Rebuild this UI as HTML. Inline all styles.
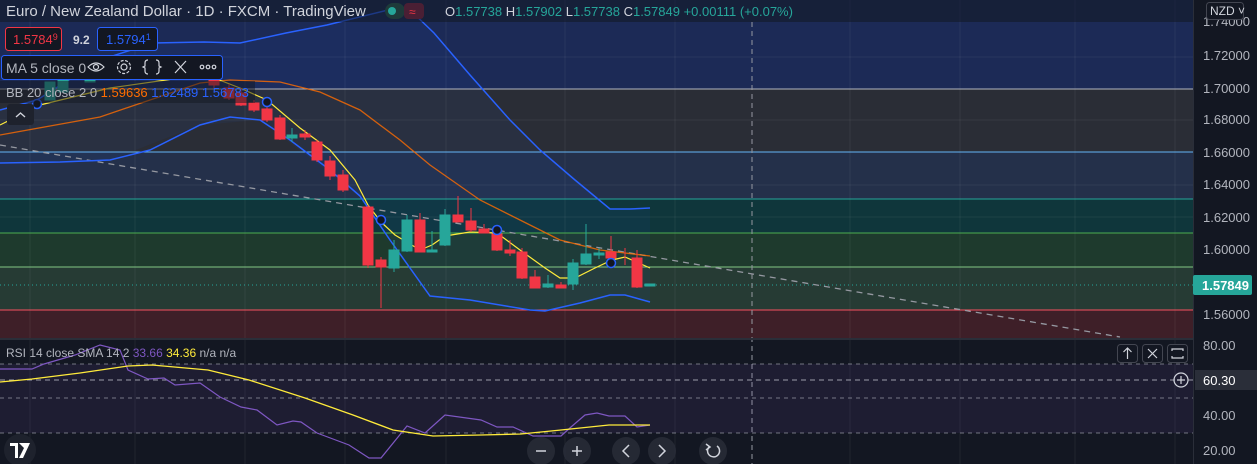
<!DOCTYPE html>
<html><head><meta charset="utf-8"><style>
html,body{margin:0;padding:0;background:#131722;width:1257px;height:464px;overflow:hidden;font-family:"Liberation Sans",sans-serif}
svg{display:block}
</style></head><body>
<svg width="1257" height="464" xmlns="http://www.w3.org/2000/svg" font-family="Liberation Sans, sans-serif">
<rect width="1257" height="464" fill="#131722"/>
<rect x="0" y="0" width="1193" height="89" fill="#1c2a56"/>
<rect x="0" y="89" width="1193" height="63" fill="#2a2d36"/>
<rect x="0" y="152" width="1193" height="47" fill="#24304a"/>
<rect x="0" y="199" width="1193" height="34" fill="#0f363b"/>
<rect x="0" y="233" width="1193" height="34" fill="#1e3a2d"/>
<rect x="0" y="267" width="1193" height="43" fill="#263b34"/>
<rect x="0" y="310" width="1193" height="28" fill="#3e1f28"/>
<path d="M0,110 L37,100 L100,60 L153,43 L204,42 L240,43 L286,33 L327,25 L388,10 L408,8 L434,33 L510,120 L540,150 L575,180 L610,209 L650,208 L650,302 L625,295 L545,311 L430,296 L360,196 L260,120 L200,125 L110,160 L0,163Z" fill="#2962ff" fill-opacity="0.06"/>
<g stroke="#ffffff" stroke-opacity="0.06">
<line x1="30" y1="0" x2="30" y2="464"/><line x1="135" y1="0" x2="135" y2="464"/><line x1="245" y1="0" x2="245" y2="464"/><line x1="345" y1="0" x2="345" y2="464"/><line x1="446" y1="0" x2="446" y2="464"/><line x1="565" y1="0" x2="565" y2="464"/><line x1="675" y1="0" x2="675" y2="464"/><line x1="850" y1="0" x2="850" y2="464"/><line x1="960" y1="0" x2="960" y2="464"/><line x1="1075" y1="0" x2="1075" y2="464"/><line x1="1175" y1="0" x2="1175" y2="464"/>
<line x1="0" y1="57" x2="1193" y2="57"/><line x1="0" y1="120" x2="1193" y2="120"/><line x1="0" y1="185" x2="1193" y2="185"/><line x1="0" y1="217" x2="1193" y2="217"/>
</g>
<line x1="0" y1="89" x2="1193" y2="89" stroke="#b2b5be"/>
<line x1="0" y1="152" x2="1193" y2="152" stroke="#64b5f6"/>
<line x1="0" y1="199" x2="1193" y2="199" stroke="#26a69a"/>
<line x1="0" y1="233" x2="1193" y2="233" stroke="#4caf50"/>
<line x1="0" y1="267" x2="1193" y2="267" stroke="#81c784"/>
<line x1="0" y1="310" x2="1193" y2="310" stroke="#f7525f"/>
<line x1="0" y1="285" x2="1193" y2="285" stroke="#26a69a" stroke-dasharray="1 3"/>
<line x1="0" y1="145" x2="1120" y2="337" stroke="#9598a1" stroke-width="1.3" stroke-dasharray="6 5"/>
<polyline fill="none" stroke="#2962ff" stroke-width="1.5" points="0,110 37,100 100,60 153,43 204,42 240,43 286,33 327,25 388,10 408,8 434,33 470,75 510,120 540,150 575,180 610,209 630,209 650,208"/>
<polyline fill="none" stroke="#2962ff" stroke-width="1.5" points="0,163 60,162 110,160 150,150 200,125 230,117 260,120 290,140 330,170 360,196 390,240 430,296 470,300 530,310 545,311 580,303 610,295 625,295 650,302"/>
<polyline fill="none" stroke="#ff6d00" stroke-opacity="0.8" stroke-width="1.3" points="0,135 50,126 100,117 150,100 200,83 230,80 280,82 320,92 360,110 400,140 430,165 480,200 530,225 560,240 600,250 650,256"/>
<polyline fill="none" stroke="#ffeb3b" stroke-width="1.2" points="0,125 40,105 110,88 180,78 214,78 240,88 267,100 300,128 330,150 355,180 368,205 381,222 395,235 420,250 432,245 445,236 470,232 497,233 520,250 545,268 560,278 575,278 595,268 612,260 625,257 650,268"/>
<g stroke-width="1">
<g fill="#f23645" stroke="#f23645">
<line x1="214" y1="76" x2="214" y2="88"/><rect x="209" y="80" width="10" height="5"/>
<line x1="229" y1="84" x2="229" y2="100"/><rect x="224" y="88" width="10" height="10"/>
<line x1="241" y1="88" x2="241" y2="106"/><rect x="236" y="93" width="10" height="12"/>
<line x1="254" y1="100" x2="254" y2="112"/><rect x="249" y="103" width="10" height="7"/>
<line x1="267" y1="102" x2="267" y2="122"/><rect x="262" y="109" width="10" height="11"/>
<line x1="280" y1="115" x2="280" y2="140"/><rect x="275" y="118" width="10" height="21"/>
<line x1="305" y1="130" x2="305" y2="140"/><rect x="300" y="134" width="10" height="3"/>
<line x1="317" y1="140" x2="317" y2="162"/><rect x="312" y="142" width="10" height="18"/>
<line x1="330" y1="156" x2="330" y2="180"/><rect x="325" y="161" width="10" height="15"/>
<line x1="343" y1="170" x2="343" y2="192"/><rect x="338" y="175" width="10" height="15"/>
<line x1="368" y1="205" x2="368" y2="268"/><rect x="363" y="207" width="10" height="58"/>
<line x1="381" y1="257" x2="381" y2="308"/><rect x="376" y="260" width="10" height="7"/>
<line x1="420" y1="213" x2="420" y2="252"/><rect x="415" y="220" width="10" height="32"/>
<line x1="458" y1="196" x2="458" y2="222"/><rect x="453" y="215" width="10" height="7"/>
<line x1="471" y1="208" x2="471" y2="232"/><rect x="466" y="221" width="10" height="9"/>
<line x1="484" y1="224" x2="484" y2="233"/><rect x="479" y="229" width="10" height="4"/>
<line x1="497" y1="230" x2="497" y2="251"/><rect x="492" y="234" width="10" height="16"/>
<line x1="510" y1="240" x2="510" y2="256"/><rect x="505" y="250" width="10" height="3"/>
<line x1="522" y1="248" x2="522" y2="279"/><rect x="517" y="252" width="10" height="26"/>
<line x1="535" y1="270" x2="535" y2="288"/><rect x="530" y="277" width="10" height="11"/>
<line x1="561" y1="282" x2="561" y2="288"/><rect x="556" y="285" width="10" height="3"/>
<line x1="611" y1="236" x2="611" y2="265"/><rect x="606" y="252" width="10" height="6"/>
<line x1="625" y1="248" x2="625" y2="265"/>
<line x1="637" y1="250" x2="637" y2="288"/><rect x="632" y="258" width="10" height="29"/>
</g>
<g fill="#26a69a" stroke="#26a69a">
<line x1="292" y1="128" x2="292" y2="142"/><rect x="287" y="135" width="10" height="3"/>
<line x1="394" y1="240" x2="394" y2="272"/><rect x="389" y="250" width="10" height="18"/>
<line x1="407" y1="215" x2="407" y2="252"/><rect x="402" y="220" width="10" height="31"/>
<line x1="432" y1="231" x2="432" y2="252"/><rect x="427" y="250" width="10" height="2"/>
<line x1="445" y1="209" x2="445" y2="246"/><rect x="440" y="215" width="10" height="30"/>
<line x1="548" y1="275" x2="548" y2="288"/><rect x="543" y="284" width="10" height="3"/>
<line x1="573" y1="259" x2="573" y2="290"/><rect x="568" y="263" width="10" height="21"/>
<line x1="586" y1="224" x2="586" y2="265"/><rect x="581" y="254" width="10" height="10"/>
<line x1="599" y1="248" x2="599" y2="259"/><rect x="594" y="253" width="10" height="2"/>
<rect x="645" y="284" width="10" height="2"/>
<rect x="45" y="82" width="10" height="18"/><rect x="58" y="78" width="10" height="14"/><rect x="85" y="70" width="10" height="12"/><rect x="110" y="60" width="10" height="10"/>
</g>
</g>
<g fill="#131722" stroke="#2962ff" stroke-width="1.5">
<circle cx="37" cy="104" r="4.5"/><circle cx="267" cy="102" r="4.5"/><circle cx="381" cy="220" r="4.5"/><circle cx="497" cy="230" r="4.5"/><circle cx="611" cy="263" r="4.5"/>
</g>
<rect x="0" y="0" width="1193" height="22" fill="#131722" fill-opacity="0.55"/>
<text x="6" y="16" fill="#d1d4dc" font-size="15">Euro / New Zealand Dollar · 1D · FXCM · TradingView</text>
<rect x="385" y="3" width="20" height="16" rx="8" fill="#1e3a3a"/><circle cx="392" cy="11" r="4" fill="#26a69a"/>
<rect x="404" y="3" width="20" height="16" rx="4" fill="#4a1f34"/><text x="409" y="16" fill="#f23645" font-size="12">≈</text>
<text x="445" y="16" font-size="13" fill="#26a69a"><tspan fill="#d1d4dc">O</tspan>1.57738 <tspan fill="#d1d4dc">H</tspan>1.57902 <tspan fill="#d1d4dc">L</tspan>1.57738 <tspan fill="#d1d4dc">C</tspan>1.57849 +0.00111 (+0.07%)</text>
<rect x="5.5" y="27.5" width="56" height="23" rx="3" fill="#131722" stroke="#f23645"/>
<text x="13" y="44" fill="#f23645" font-size="13">1.5784<tspan font-size="9" dy="-4">9</tspan></text>
<text x="73" y="44" fill="#d1d4dc" font-size="12" font-weight="bold">9.2</text>
<rect x="97.5" y="27.5" width="60" height="23" rx="3" fill="#131722" stroke="#2962ff"/>
<text x="106" y="44" fill="#2962ff" font-size="13">1.5794<tspan font-size="9" dy="-4">1</tspan></text>
<rect x="1.5" y="55.5" width="221" height="24" rx="3" fill="#131722" stroke="#2962ff"/>
<text x="6" y="73" fill="#b2b5be" font-size="14">MA 5 close 0</text>
<g stroke="#d1d4dc" fill="none" stroke-width="1.2">
<path d="M88,67 Q96,59 104,67 Q96,75 88,67Z"/><circle cx="96" cy="67" r="2.5"/>
<circle cx="124" cy="67" r="3"/><circle cx="124" cy="67" r="6.5" stroke-dasharray="3 1.5"/>
<path d="M148,60 Q145,60 145,63 L145,66 L143,67 L145,68 L145,71 Q145,74 148,74 M156,60 Q159,60 159,63 L159,66 L161,67 L159,68 L159,71 Q159,74 156,74"/>
<path d="M175,61 L186,73 M186,61 L175,73"/>
<circle cx="202" cy="67" r="1.8"/><circle cx="208" cy="67" r="1.8"/><circle cx="214" cy="67" r="1.8"/>
</g>
<rect x="0" y="81" width="255" height="22" fill="#131722" fill-opacity="0.5"/>
<text x="6" y="97" font-size="13" fill="#b2b5be">BB 20 close 2 0 <tspan fill="#ff6d00">1.59636</tspan> <tspan fill="#2962ff">1.62489</tspan> <tspan fill="#2962ff">1.56783</tspan></text>
<rect x="7" y="104" width="27" height="21" rx="3" fill="#1e222d"/>
<path d="M16,117 L20.5,113 L25,117" stroke="#d1d4dc" fill="none" stroke-width="1.4"/>
<line x1="752" y1="22" x2="752" y2="464" stroke="#9598a1" stroke-dasharray="5 4"/>
<rect x="0" y="338" width="1257" height="2" fill="#2a2e39"/>
<rect x="0" y="364" width="1193" height="69" fill="#7e57c2" fill-opacity="0.1"/>
<g stroke="#b2b5be" stroke-opacity="0.6" stroke-dasharray="4 4">
<line x1="0" y1="364" x2="1193" y2="364"/><line x1="0" y1="398" x2="1193" y2="398"/><line x1="0" y1="433" x2="1193" y2="433"/>
</g>
<line x1="0" y1="380" x2="1193" y2="380" stroke="#d1d4dc" stroke-opacity="0.7" stroke-dasharray="5 4"/>
<polyline fill="none" stroke="#7e57c2" stroke-width="1.2" points="0,369 32,369 44,364 75,355 100,345 120,350 128,370 148,379 164,378 175,385 200,383 220,397 241,407 257,410 277,425 293,421 301,422 317,433 349,445 369,458 381,458 407,426 425,433 445,415 481,420 497,427 513,427 533,436 561,436 571,427 585,415 597,413 609,416 625,416 637,427 650,425"/>
<polyline fill="none" stroke="#ffeb3b" stroke-width="1.3" points="0,382 32,379 80,373 128,366 152,365 208,370 249,380 305,398 353,415 393,430 433,436 481,435 521,434 561,430 609,425 650,425"/>
<text x="6" y="357" font-size="12" fill="#b2b5be">RSI 14 close SMA 14 2 <tspan fill="#7e57c2">33.66</tspan> <tspan fill="#ffeb3b">34.36</tspan> n/a n/a</text>
<g fill="#131722" stroke="#434651"><rect x="1117.5" y="344.5" width="20" height="18" rx="3"/><rect x="1142.5" y="344.5" width="20" height="18" rx="3"/><rect x="1167.5" y="344.5" width="20" height="18" rx="3"/></g>
<g stroke="#d1d4dc" fill="none" stroke-width="1.2">
<path d="M1127.5,359 L1127.5,348 M1123.5,352 L1127.5,348 L1131.5,352"/>
<path d="M1148,349 L1157,358 M1157,349 L1148,358"/>
<path d="M1172,351 L1172,349 L1183,349 L1183,351 M1172,356 L1172,358 L1183,358 L1183,356"/>
<circle cx="1181" cy="380" r="7"/><path d="M1177,380 L1185,380 M1181,376 L1181,384"/>
</g>
<g fill="#2a2e39" fill-opacity="0.8"><circle cx="541" cy="451" r="14"/><circle cx="577" cy="451" r="14"/><circle cx="626" cy="451" r="14"/><circle cx="662" cy="451" r="14"/><circle cx="713" cy="451" r="14"/></g>
<g stroke="#d1d4dc" fill="none" stroke-width="1.5">
<path d="M536,451 L546,451"/><path d="M572,451 L582,451 M577,446 L577,456"/>
<path d="M629,445 L623,451 L629,457"/><path d="M659,445 L665,451 L659,457"/>
<path d="M717,446 A6,6 0 1 1 709,447"/><path d="M706,444 L710,447 L706,450"/>
</g>
<circle cx="20" cy="450" r="16" fill="#1e222d"/>
<path d="M10,443 L18,443 L18,458 L15,458 L15,446 L10,446Z M19,443 L30,443 L23,458 L19,458 L24,448 Z" fill="#ffffff"/>
<rect x="1193" y="0" width="64" height="464" fill="#131722"/>
<line x1="1193.5" y1="0" x2="1193.5" y2="464" stroke="#2a2e39"/>
<g font-size="13" fill="#b2b5be">
<text x="1203" y="26">1.74000</text>
<text x="1203" y="60">1.72000</text>
<text x="1203" y="93">1.70000</text>
<text x="1203" y="124">1.68000</text>
<text x="1203" y="157">1.66000</text>
<text x="1203" y="189">1.64000</text>
<text x="1203" y="222">1.62000</text>
<text x="1203" y="254">1.60000</text>
<text x="1203" y="319">1.56000</text>
<text x="1203" y="350">80.00</text>
<text x="1203" y="420">40.00</text>
<text x="1203" y="455">20.00</text>
</g>
<rect x="1206.5" y="2.5" width="37" height="17" rx="3" fill="#131722" stroke="#434651"/>
<text x="1210" y="15" font-size="12" fill="#d1d4dc">NZD ˅</text>
<rect x="1193" y="275" width="59" height="20" rx="2" fill="#26a69a"/>
<text x="1202" y="290" font-size="13" font-weight="bold" fill="#ffffff">1.57849</text>
<rect x="1195" y="370" width="62" height="20" fill="#2a2e39"/>
<text x="1203" y="385" font-size="13" fill="#ffffff">60.30</text>
</svg>
</body></html>
